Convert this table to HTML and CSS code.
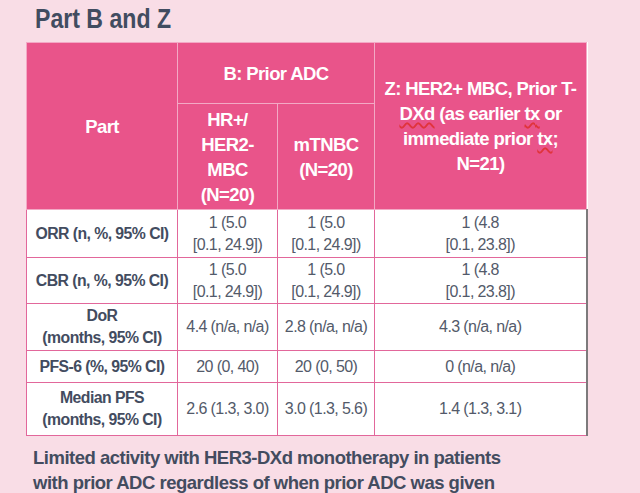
FILE: index.html
```html
<!DOCTYPE html>
<html lang="en">
<head>
<meta charset="utf-8">
<title>Part B and Z</title>
<link rel="stylesheet" href="styles.css">
</head>
<body>
<div class="slide">
  <h1 class="title"><span class="title-text">Part B and Z</span></h1>
  <table class="results">
    <colgroup>
      <col class="c-part">
      <col class="c-hr">
      <col class="c-tnbc">
      <col class="c-z">
    </colgroup>
    <thead>
      <tr class="h1row">
        <th rowspan="2">Part</th>
        <th colspan="2">B: Prior ADC</th>
        <th rowspan="2">Z: HER2+ MBC, Prior T-<br><span class="sp">DXd</span> (as earlier <span class="sp">tx</span> or<br>immediate prior <span class="sp">tx</span>;<br>N=21)</th>
      </tr>
      <tr class="h2row">
        <th>HR+/<br>HER2-<br>MBC<br>(N=20)</th>
        <th>mTNBC<br>(N=20)</th>
      </tr>
    </thead>
    <tbody>
      <tr class="r-orr">
        <th>ORR (n, %, 95% CI)</th>
        <td>1 (5.0<br>[0.1, 24.9])</td>
        <td>1 (5.0<br>[0.1, 24.9])</td>
        <td class="last">1 (4.8<br>[0.1, 23.8])</td>
      </tr>
      <tr class="r-cbr">
        <th>CBR (n, %, 95% CI)</th>
        <td>1 (5.0<br>[0.1, 24.9])</td>
        <td>1 (5.0<br>[0.1, 24.9])</td>
        <td class="last">1 (4.8<br>[0.1, 23.8])</td>
      </tr>
      <tr class="r-dor">
        <th>DoR<br>(months, 95% CI)</th>
        <td>4.4 (n/a, n/a)</td>
        <td>2.8 (n/a, n/a)</td>
        <td class="last">4.3 (n/a, n/a)</td>
      </tr>
      <tr class="r-pfs6">
        <th>PFS-6 (%, 95% CI)</th>
        <td>20 (0, 40)</td>
        <td>20 (0, 50)</td>
        <td class="last">0 (n/a, n/a)</td>
      </tr>
      <tr class="r-mpfs">
        <th>Median PFS<br>(months, 95% CI)</th>
        <td>2.6 (1.3, 3.0)</td>
        <td>3.0 (1.3, 5.6)</td>
        <td class="last">1.4 (1.3, 3.1)</td>
      </tr>
    </tbody>
  </table>
  <p class="note">Limited activity with HER3-DXd monotherapy in patients<br>with prior ADC regardless of when prior ADC was given</p>
</div>
</body>
</html>
```
FILE: styles.css
```css
html, body {
  margin: 0;
  padding: 0;
  background: #f9dde6;
}
body {
  width: 640px;
  height: 493px;
  overflow: hidden;
  font-family: "Liberation Sans", Arial, sans-serif;
  color: #434c5f;
}
.slide {
  padding: 2px 0 0 0;
}
.title {
  margin: 0 0 6px 0;
  padding-left: 35px;
  font-size: 27.5px;
  line-height: 34px;
  font-weight: bold;
  color: #414c60;
}
.title-text {
  display: inline-block;
  transform: scaleX(0.84);
  transform-origin: left center;
}
.results {
  margin-left: 26px;
  width: 561px;
  table-layout: fixed;
  border-collapse: collapse;
  background: #ffffff;
  border-bottom: 1px solid #d8709a;
}
.c-part { width: 151px; }
.c-hr { width: 100px; }
.c-tnbc { width: 97px; }
.c-z { width: 212px; }
.results thead th {
  background: #e9548a;
  color: #ffffff;
  font-size: 18.5px;
  letter-spacing: -0.6px;
  line-height: 25px;
  font-weight: bold;
  border: 1px solid #f3a9c5;
  padding: 0;
  text-align: center;
  vertical-align: middle;
}
.h1row { height: 61px; }
.h2row { height: 106px; }
.sp {
  text-decoration-line: underline;
  text-decoration-style: wavy;
  text-decoration-color: #e0343c;
  text-decoration-thickness: 1.5px;
  text-underline-offset: 2px;
}
.results tbody th,
.results tbody td {
  border: 1px solid #e2679b;
  padding: 0;
  text-align: center;
  vertical-align: middle;
  line-height: 22px;
}
.results tbody td.last {
  border-right: 2px solid #7d7a7c;
}
.results tbody th {
  font-size: 15.8px;
  letter-spacing: -0.55px;
  font-weight: bold;
  color: #434c5f;
}
.results tbody td {
  font-size: 16px;
  letter-spacing: -0.6px;
  color: #535a6a;
}
.r-orr { height: 48px; }
.r-cbr { height: 46px; }
.r-dor { height: 47px; }
.r-pfs6 { height: 32px; }
.r-mpfs { height: 53px; }
.note {
  margin: 9px 0 0 33px;
  font-size: 18.5px;
  letter-spacing: -0.5px;
  line-height: 25px;
  font-weight: bold;
  color: #434c5f;
}
```
